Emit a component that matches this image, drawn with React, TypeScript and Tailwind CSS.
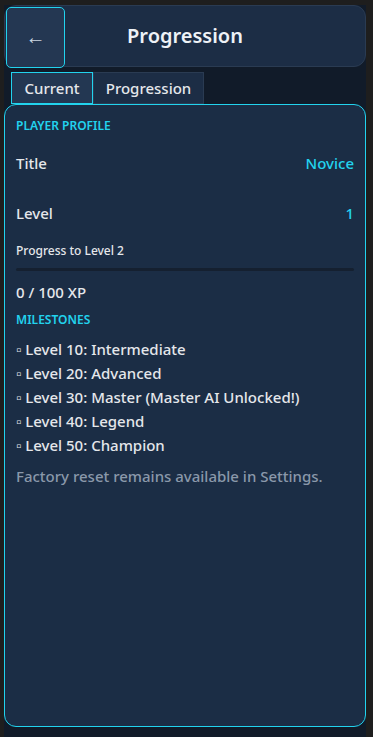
import React from 'react';

const milestones = [
  'Level 10: Intermediate',
  'Level 20: Advanced',
  'Level 30: Master (Master AI Unlocked!)',
  'Level 40: Legend',
  'Level 50: Champion',
];

export default function App() {
  return (
    <div
      className="h-[737px] w-[373px] bg-[#1e1e1e] pl-[4px] pt-[5px] pr-[7px]"
      style={{ fontFamily: '"Noto Sans", "Open Sans", sans-serif' }}
    >
      <div className="flex h-full flex-col bg-[#111b29] pb-[10px]">
        {/* Header */}
        <div className="relative flex h-[62px] items-center rounded-[12px] border border-[#2a3b52] bg-[#1c2d45]">
          <button className="absolute left-[1px] top-[1px] flex h-[61px] w-[59px] items-center justify-center rounded-[5px] border border-[#22d3ee] bg-[#243752] pb-[2px] text-[20px] text-[#cbd5e1]">
            ←
          </button>
          <h1 className="w-full text-center text-[20px] font-semibold text-[#eef2f7]">Progression</h1>
        </div>

        {/* Tabs */}
        <div className="mt-[5px] flex pl-[7px]">
          <div className="flex h-[32px] w-[82px] items-center justify-center border border-[#22d3ee] bg-[#233752] text-[15px] font-medium text-[#e5e7eb]">
            Current
          </div>
          <div className="flex h-[32px] w-[111px] items-center justify-center border border-[#2a3b52] bg-[#1c2d45] text-[15px] font-medium text-[#e5e7eb]">
            Progression
          </div>
        </div>

        {/* Content card */}
        <div className="flex-1 rounded-[12px] border border-[#22d3ee] bg-[#1b2d45] px-[11px] pt-[12px]">
          <div className="text-[12px] font-semibold text-[#22d3ee]">PLAYER PROFILE</div>

          <div className="mt-[17px] flex items-center justify-between text-[15px] font-medium">
            <span className="text-[#e5e7eb]">Title</span>
            <span className="text-[#22d3ee]">Novice</span>
          </div>

          <div className="mt-[27px] flex items-center justify-between text-[15px] font-medium">
            <span className="text-[#e5e7eb]">Level</span>
            <span className="text-[#22d3ee]">1</span>
          </div>

          <div className="mt-[18px] text-[12px] font-medium text-[#e5e7eb]">Progress to Level 2</div>
          <div className="mt-[8px] h-[3px] w-full rounded-full bg-[#152030]">
            <div className="h-full rounded-full bg-[#22d3ee]" style={{ width: '0%' }} />
          </div>

          <div className="mt-[10px] text-[15px] font-medium text-[#e5e7eb]">0 / 100 XP</div>

          <div className="mt-[7px] text-[12px] font-semibold text-[#22d3ee]">MILESTONES</div>

          <ul className="mt-[8px] flex flex-col">
            {milestones.map((m) => (
              <li key={m} className="h-[24px] text-[15px] font-medium leading-[24px] text-[#e5e7eb]">
                ▫ {m}
              </li>
            ))}
          </ul>

          <p className="mt-[8px] text-[15px] font-medium text-[#8a98aa]">
            Factory reset remains available in Settings.
          </p>
        </div>
      </div>
    </div>
  );
}
